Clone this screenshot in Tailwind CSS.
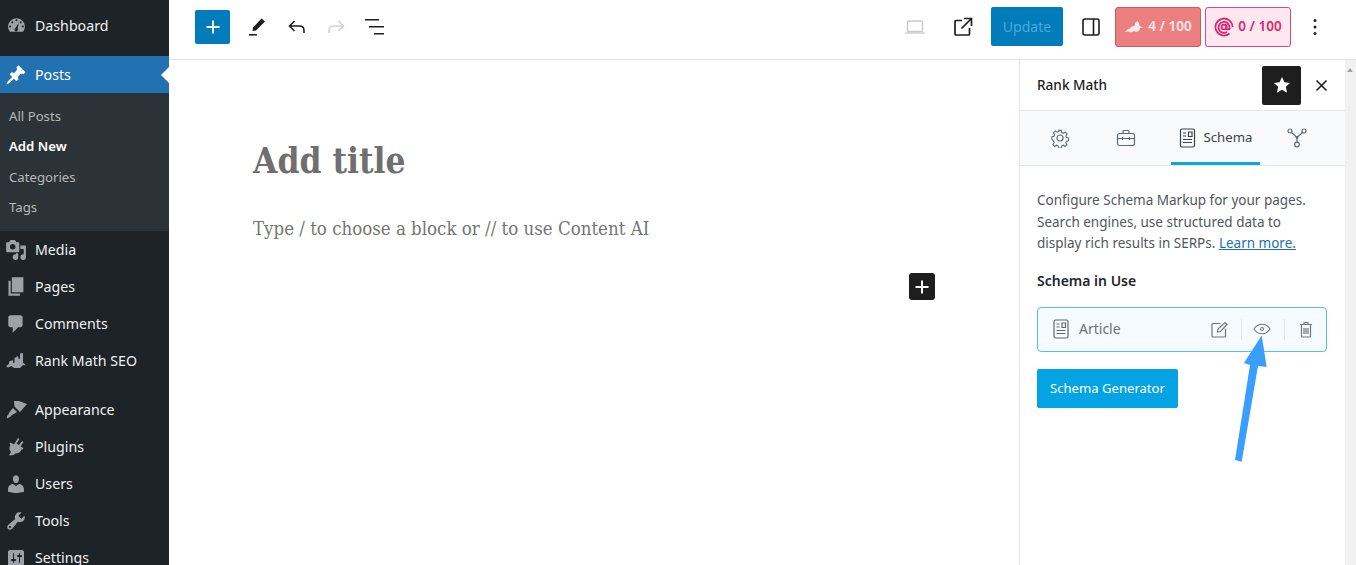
<!DOCTYPE html>
<html>
<head>
<meta charset="utf-8">
<script src="https://cdn.jsdelivr.net/npm/@tailwindcss/browser@4"></script>
</head>
<body class="m-0 overflow-hidden bg-white">
<div class="relative flex h-[565px] w-[1356px] overflow-hidden font-['Noto_Sans',sans-serif]">
  <!-- Sidebar -->
  <aside class="flex w-[169px] shrink-0 flex-col overflow-hidden bg-[#1d2327] text-[14.2px] text-[#eef0f1]">
    <div class="flex h-[56px] shrink-0 items-start pt-[7px]">
      <a class="flex h-[37px] w-full items-center">
        <span class="mr-[3px] flex w-[32px] justify-center text-[#9ca2a7]"><svg width="21" height="21" viewBox="0 0 20 20" fill="currentColor"><path fill-rule="evenodd" d="M3.760 16h12.480c1.100-1.370 1.760-3.110 1.760-5 0-4.420-3.580-8-8-8s-8 3.580-8 8c0 1.890.660 3.630 1.760 5zM10 4a1 1 0 1 1 0 2 1 1 0 0 1 0-2zM6 6a1 1 0 1 1 0 2 1 1 0 0 1 0-2zm8 0a1 1 0 1 1 0 2 1 1 0 0 1 0-2zM4 10a1 1 0 1 1 0 2 1 1 0 0 1 0-2zm12 0a1 1 0 1 1 0 2 1 1 0 0 1 0-2zM12 7.500l-.8 5.700a1.600 1.600 0 1 1-2.300-.600z"/></svg></span>
        <span>Dashboard</span>
      </a>
    </div>
    <a class="relative flex h-[37px] shrink-0 items-center bg-[#2271b1] text-white">
      <span class="mr-[3px] flex w-[32px] justify-center"><svg width="22" height="22" viewBox="0 0 20 20" fill="currentColor"><path d="M10.440 3.020l1.820-1.820 6.360 6.350-1.830 1.820c-1.050-.680-2.480-.570-3.410.360l-.750.750c-.920.930-1.040 2.350-.350 3.410l-1.830 1.820-2.410-2.410-2.800 2.790c-.420.420-3.380 2.710-3.800 2.290s1.860-3.390 2.280-3.810l2.790-2.790L4.100 9.360l1.830-1.820c1.050.690 2.480.570 3.400-.360l.750-.750c.930-.920 1.050-2.350.360-3.410z"/></svg></span>
      <span>Posts</span>
      <span class="absolute right-0 h-0 w-0 border-y-[8px] border-r-[8px] border-y-transparent border-r-white"></span>
    </a>
    <div class="flex h-[138px] shrink-0 flex-col bg-[#2c3338] pt-[8px] pl-[9px] text-[13.2px] text-[#b4b9be]">
      <a class="flex h-[31px] items-center pt-[1px]">All Posts</a>
      <a class="flex h-[30px] items-center font-semibold text-white">Add New</a>
      <a class="flex h-[31px] items-center">Categories</a>
      <a class="flex h-[30px] items-center">Tags</a>
    </div>
    <nav class="flex flex-col">
      <a class="flex h-[37px] shrink-0 items-center pt-[1px]"><span class="mr-[3px] flex w-[32px] justify-center text-[#9ca2a7]"><svg width="22" height="22" viewBox="0 0 20 20" fill="currentColor"><path fill-rule="evenodd" d="M13 11V4c0-.550-.450-1-1-1h-1.670L9 1H5L3.670 3H2c-.550 0-1 .450-1 1v7c0 .550.450 1 1 1h10c.550 0 1-.450 1-1zM7 4.500a2.500 2.500 0 1 1 0 5 2.500 2.500 0 0 1 0-5zM14 6h5v10.500a2.500 2.500 0 1 1-2-2.450V9h-3V6zm-4 8.050V13h2v3.500a2.500 2.500 0 1 1-2-2.450z"/></svg></span><span>Media</span></a>
      <a class="flex h-[37px] shrink-0 items-center"><span class="mr-[3px] flex w-[32px] justify-center text-[#9ca2a7]"><svg width="23" height="23" viewBox="0 0 20 20" fill="currentColor"><path d="M6 15V2h10v13H6zm-1 1h8v2H3V5h2v11z"/></svg></span><span>Pages</span></a>
      <a class="flex h-[37px] shrink-0 items-center"><span class="mr-[3px] flex w-[32px] justify-center text-[#9ca2a7]"><svg width="22" height="22" viewBox="0 0 20 20" fill="currentColor"><path d="M5 2h9c1.100 0 2 .900 2 2v7c0 1.100-.900 2-2 2h-2l-5 5v-5H5c-1.100 0-2-.900-2-2V4c0-1.100.900-2 2-2z"/></svg></span><span>Comments</span></a>
      <a class="flex h-[37px] shrink-0 items-center"><span class="mr-[3px] flex w-[32px] justify-center text-[#9ca2a7]"><svg width="22" height="16" viewBox="0 0 22 16" fill="currentColor"><path d="M1 13l3-2V8.500L8 7v3l1.500-.5V5L13 3l.5 3 1.500-.5V.5L18 0v9.500l3 3-3-.5-3 3H9L6.500 13 3 14.500z"/></svg></span><span>Rank Math SEO</span></a>
      <div class="h-[12px] shrink-0"></div>
      <a class="flex h-[37px] shrink-0 items-center"><span class="mr-[3px] flex w-[32px] justify-center text-[#9ca2a7]"><svg width="21" height="19" viewBox="0 0 21 19" fill="currentColor"><path d="M8 1h5l8 3-7 8-3-3-2.500-2.500zM7 8l4 4-3 2c-2 .500-3 2-4 3l-3 1.500L1 16c1-1 2-2 2.500-4z"/></svg></span><span>Appearance</span></a>
      <a class="flex h-[37px] shrink-0 items-center"><span class="mr-[3px] flex w-[32px] justify-center text-[#9ca2a7]"><svg width="18" height="18" viewBox="0 0 18 18" fill="currentColor"><path d="M11 0l1.500 1-3 4.500L12 7l3-4 1.500 1-3 4.500 3 1.500-1 1.500h-1c-1 2.500-3 4-6 4l-2 1.500-4.500.500 2-3.500C2 12 2 9 3.500 7l-1-1 1-1.500L7 6.500z"/></svg></span><span>Plugins</span></a>
      <a class="flex h-[37px] shrink-0 items-center"><span class="mr-[3px] flex w-[32px] justify-center text-[#9ca2a7]"><svg width="22" height="22" viewBox="0 0 20 20" fill="currentColor"><path d="M10 9.250c-2.270 0-2.730-3.440-2.730-3.440C7 4.020 7.820 2 9.970 2c2.160 0 2.980 2.020 2.710 3.810 0 0-.410 3.440-2.680 3.440zm0 2.570L12.720 10c2.390 0 4.520 2.330 4.520 4.530v2.490s-3.650 1.130-7.240 1.130c-3.650 0-7.240-1.130-7.240-1.130v-2.490c0-2.250 1.940-4.480 4.470-4.480z"/></svg></span><span>Users</span></a>
      <a class="flex h-[37px] shrink-0 items-center"><span class="mr-[3px] flex w-[32px] justify-center text-[#9ca2a7]"><svg width="22" height="22" viewBox="0 0 20 20" fill="currentColor"><path fill-rule="evenodd" d="M16.680 9.770c-1.340 1.340-3.300 1.670-4.950.990l-5.410 6.520c-.990.990-2.590.990-3.570 0-.990-.980-.990-2.580 0-3.570l6.520-5.420c-.680-1.650-.350-3.610.990-4.950 1.280-1.280 3.120-1.620 4.720-1.060l-2.890 2.890 2.820 2.820 2.860-2.870c.530 1.580.180 3.400-1.090 4.670zM3.810 16.210c.400.390 1.040.390 1.430 0 .400-.400.400-1.040 0-1.440-.390-.390-1.030-.390-1.430 0-.390.400-.390 1.040 0 1.440z"/></svg></span><span>Tools</span></a>
      <a class="flex h-[37px] shrink-0 items-center"><span class="mr-[3px] flex w-[32px] justify-center text-[#9ca2a7]"><svg width="20" height="20" viewBox="0 0 20 20" fill="currentColor"><path fill-rule="evenodd" d="M18 16V4c0-1.100-.900-2-2-2H4c-1.100 0-2 .900-2 2v12c0 1.100.900 2 2 2h12c1.100 0 2-.900 2-2zM8 11h1c.550 0 1 .450 1 1s-.450 1-1 1H8v1.500c0 .280-.220.500-.500.500s-.500-.220-.500-.500V13H6c-.550 0-1-.450-1-1s.450-1 1-1h1V5.500c0-.280.220-.500.500-.500s.500.220.500.500V11zm5-2h-1c-.550 0-1-.450-1-1s.450-1 1-1h1V5.500c0-.280.220-.500.500-.500s.500.220.500.500V7h1c.550 0 1 .450 1 1s-.450 1-1 1h-1v5.500c0 .280-.220.500-.500.500s-.500-.220-.500-.500V9z"/></svg></span><span>Settings</span></a>
    </nav>
  </aside>

  <!-- Main -->
  <div class="flex min-w-0 flex-1 flex-col">
    <!-- Top bar -->
    <header class="flex h-[60px] shrink-0 items-center border-b border-[#e2e3e4] pb-[6px] pl-[26px] text-[#1e1e1e]">
      <button class="flex h-[34px] w-[35px] items-center justify-center rounded-[2px] bg-[#007cba] text-white"><svg width="18" height="18" viewBox="0 0 18 18" fill="none" stroke="currentColor" stroke-width="1.800"><path d="M9 2.500v13M2.500 9h13"/></svg></button>
      <span class="ml-[15px] flex w-[24px] justify-center"><svg width="20" height="20" viewBox="0 0 20 20" fill="currentColor"><path d="M14.500 1.500l3.500 3L9 13.500l-3.500.500.500-3.500z"/><path d="M2 17h8v1.600H2z"/></svg></span>
      <span class="ml-[16px] flex w-[24px] justify-center"><svg width="20" height="18" viewBox="0 0 20 18" fill="none" stroke="currentColor" stroke-width="1.600"><path d="M7.500 3L2.500 8l5 5M3 8h9.500c3 0 4.500 2 4.500 4.500V15"/></svg></span>
      <span class="ml-[15px] flex w-[24px] justify-center text-[#d0d2d3]"><svg width="20" height="18" viewBox="0 0 20 18" fill="none" stroke="currentColor" stroke-width="1.600"><path d="M12.500 3l5 5-5 5M17 8H7.500C4.500 8 3 10 3 12.500V15"/></svg></span>
      <span class="ml-[15px] flex w-[24px] justify-center"><svg width="22" height="18" viewBox="0 0 22 18" fill="currentColor"><path d="M1 1h14v1.600H1zM5 8h15v1.600H5zM10 15h10v1.600H10z"/></svg></span>
      <span class="ml-auto flex w-[24px] justify-center text-[#c8c9ca]"><svg width="22" height="16" viewBox="0 0 22 16" fill="none" stroke="currentColor" stroke-width="1.300"><rect x="3.500" y="2" width="15" height="10.500" rx="1"/><path d="M1 14h20"/></svg></span>
      <span class="ml-[24px] flex w-[24px] justify-center"><svg width="20" height="20" viewBox="0 0 20 20" fill="none" stroke="currentColor" stroke-width="1.700"><path d="M9 3.500H3a1 1 0 0 0-1 1V17a1 1 0 0 0 1 1h12.500a1 1 0 0 0 1-1v-6M11 1.500h7.500V9M18.500 1.500L8.500 11.500"/></svg></span>
      <button class="ml-[16px] flex h-[39px] w-[72px] items-center justify-center rounded-[2px] bg-[#007cba] text-[14px] text-[#4fa6d6]">Update</button>
      <span class="ml-[16px] flex w-[24px] justify-center"><svg width="18" height="18" viewBox="0 0 18 18" fill="none" stroke="currentColor" stroke-width="1.600"><rect x="1" y="1" width="16" height="16" rx="2"/><path d="M11.500 1v16"/></svg></span>
      <button class="ml-[12px] flex h-[40px] w-[86px] items-center justify-center gap-[4px] rounded-[3px] border border-[#cf5a5a] bg-[#ec8080] text-[13.5px] font-semibold text-[#fbeaea]"><svg width="20" height="16" viewBox="0 0 20 16" fill="currentColor"><path d="M1 13l3-3 2-.500 1.500-2 3-.500.500-3 2.500-2 1.500 2 .500 3 4 1.500-3.500.500L15 12l-3 1-2-1-3 1.500-1.500-1z"/></svg><span>4 / 100</span></button>
      <button class="ml-[4px] flex h-[40px] w-[86px] items-center justify-center gap-[4px] rounded-[3px] border border-[#e0457e] bg-[#fde8f0] text-[13.5px] font-semibold text-[#e0246e]"><svg width="20" height="20" viewBox="0 0 20 20" fill="none" stroke="currentColor" stroke-width="1.800"><path d="M15.500 16.500A8.500 8.500 0 1 1 18.500 10"/><path d="M13 15a5.500 5.500 0 1 1 2.500-5v2.500"/><circle cx="10" cy="10" r="2.400"/><path d="M12.500 7.500v3.500a1.500 1.500 0 0 0 3 0"/></svg><span>0 / 100</span></button>
      <span class="ml-[12px] flex w-[24px] justify-center"><svg width="4" height="18" viewBox="0 0 4 18" fill="currentColor"><circle cx="2" cy="2.500" r="1.500"/><circle cx="2" cy="9" r="1.500"/><circle cx="2" cy="15.500" r="1.500"/></svg></span>
      <span class="w-[29px] shrink-0"></span>
    </header>

    <div class="flex min-h-0 flex-1">
      <!-- Editor -->
      <main class="relative w-[850px] shrink-0 pl-[84px] font-['DejaVu_Serif',serif] font-stretch-condensed">
        <h1 class="mt-[79px] text-[35px] leading-[44px] font-bold text-[#6f6f6f]">Add title</h1>
        <p class="mt-[31px] text-[18.5px] leading-[30px] text-[#757575]">Type / to choose a block or // to use Content AI</p>
        <button class="absolute top-[213px] left-[740px] flex h-[27px] w-[26px] items-center justify-center rounded-[3px] bg-[#1e1e1e] text-white"><svg width="16" height="16" viewBox="0 0 16 16" fill="none" stroke="currentColor" stroke-width="2"><path d="M8 1.500v13M1.500 8h13"/></svg></button>
      </main>

      <!-- Right panel -->
      <section class="flex w-[326px] shrink-0 flex-col border-l border-[#e4e5e6]">
        <div class="flex h-[50px] shrink-0 items-center pl-[17px] text-[13.6px] font-medium text-[#1e1e1e]">
          <span>Rank Math</span>
          <button class="ml-auto flex h-[39px] w-[39px] items-center justify-center rounded-[2px] bg-[#1e1e1e] text-white"><svg width="18" height="18" viewBox="0 0 20 20" fill="currentColor"><path d="M10 1l2.700 6 6.300.700-4.700 4.300 1.300 6.500L10 15.200 4.400 18.500 5.700 12 1 7.700 7.300 7z"/></svg></button>
          <span class="mr-[17px] ml-[13px] flex w-[14px] justify-center"><svg width="13" height="13" viewBox="0 0 13 13" fill="none" stroke="currentColor" stroke-width="1.600"><path d="M1.500 1.500l10 10M11.500 1.500l-10 10"/></svg></span>
        </div>
        <div class="flex h-[56px] shrink-0 items-stretch border-y border-[#e4e7ea] bg-[#f8fafb] text-[13.2px] text-[#3c434a]">
          <span class="flex w-[79px] items-center justify-center"><svg width="20" height="20" viewBox="0 0 20 20" fill="none" stroke="#5f6b73" stroke-width="1.200"><circle cx="10" cy="10" r="3"/><path d="M8.500 1.500h3l.500 2.500 1.700.800 2.200-1.300 2 2.200-1.400 2.100.600 1.700 2.400.500v3l-2.400.500-.700 1.700 1.400 2.100-2.100 2.100-2.100-1.400-1.700.700-.400 2.400h-3l-.500-2.400-1.700-.700-2.100 1.400-2.100-2.100 1.400-2.100-.700-1.700L1 11.500v-3l2.400-.500.700-1.700L2.700 4.200l2.100-2.100 2.100 1.400 1.700-.700z" transform="translate(1 1) scale(.9)"/></svg></span>
          <span class="flex w-[54px] items-center justify-center"><svg width="20" height="18" viewBox="0 0 20 18" fill="none" stroke="#5f6b73" stroke-width="1.200"><rect x="1.500" y="4.500" width="17" height="12" rx="2"/><path d="M7 4.500V2.500a1 1 0 0 1 1-1h4a1 1 0 0 1 1 1v2M1.500 9.500h17M6.500 8v3M13.500 8v3"/></svg></span>
          <span class="ml-[18px] flex w-[89px] items-center justify-center gap-[8px] border-b-[3px] border-[#12a4dc] pt-[2px]"><svg width="17" height="20" viewBox="0 0 16 20" fill="none" stroke="#3c434a" stroke-width="1.200"><rect x="1" y="1" width="14" height="18" rx="1.500"/><path d="M3.500 5h3M3.500 8h3M9 4h3.500v4.500H9zM3.500 11.500h9M3.500 14.500h9"/></svg><span>Schema</span></span>
          <span class="ml-[17px] flex w-[40px] items-center justify-center"><svg width="20" height="20" viewBox="0 0 20 20" fill="none" stroke="#5f6b73" stroke-width="1.200"><circle cx="3" cy="3" r="2"/><circle cx="17" cy="3" r="2"/><circle cx="10" cy="16.500" r="2.300"/><circle cx="10" cy="9.500" r=".800"/><path d="M4.500 4.500L10 9.500 15.500 4.500M10 9.500v4.700"/></svg></span>
        </div>
        <div class="px-[17px] pt-[24px] text-[13.5px] leading-[21.500px] text-[#50575e]">
          <p class="w-[290px]">Configure Schema Markup for your pages. Search engines, use structured data to display rich results in SERPs. <a class="text-[#2271b1] underline">Learn more.</a></p>
          <h3 class="mt-[15px] text-[14px] leading-[22px] font-semibold text-[#23282d]">Schema in Use</h3>
          <div class="mt-[15px] flex h-[45px] w-[290px] items-center rounded-[4px] border border-[#55c2e3] bg-[#f5fbff] pl-[15px]">
            <svg width="16" height="20" viewBox="0 0 16 20" fill="none" stroke="#5f6b73" stroke-width="1.200"><rect x="1" y="1" width="14" height="18" rx="1.500"/><path d="M3.500 5h3M3.500 8h3M9 4h3.500v4.500H9zM3.500 11.500h9M3.500 14.500h9"/></svg>
            <span class="ml-[10px] text-[14px] text-[#6b7278]">Article</span>
            <span class="ml-auto flex w-[18px] justify-center"><svg width="17" height="17" viewBox="0 0 17 17" fill="none" stroke="#70797f" stroke-width="1.200"><path d="M9.500 2.500H2a1 1 0 0 0-1 1V15a1 1 0 0 0 1 1h11.500a1 1 0 0 0 1-1V7.500"/><path d="M6.500 11l.500-3 7-6.500 2 2-6.500 7z"/></svg></span>
            <span class="ml-[13px] h-[21px] w-[1px] bg-[#dfe7eb]"></span>
            <span class="ml-[11px] flex w-[18px] justify-center"><svg width="18" height="12" viewBox="0 0 18 12" fill="none" stroke="#70797f" stroke-width="1.100"><path d="M1 6c2-3.200 5-4.800 8-4.800s6 1.600 8 4.800c-2 3.200-5 4.800-8 4.800S3 9.200 1 6z"/><circle cx="9" cy="6" r="1.500"/></svg></span>
            <span class="ml-[13px] h-[21px] w-[1px] bg-[#dfe7eb]"></span>
            <span class="ml-[14px] mr-[13px] flex w-[14px] justify-center"><svg width="14" height="17" viewBox="0 0 14 17" fill="none" stroke="#70797f" stroke-width="1.200"><path d="M1 3.500h12M5 3.500V1.500h4v2M2.500 3.500v11.500a1 1 0 0 0 1 1h7a1 1 0 0 0 1-1V3.500M5 7v6M7 7v6M9 7v6"/></svg></span>
          </div>
          <button class="mt-[17px] flex h-[39px] w-[141px] items-center justify-center rounded-[2px] bg-[#04a4e4] pt-[1px] text-[13.1px] text-white">Schema Generator</button>
        </div>
      </section>

      <!-- Scrollbar -->
      <div class="relative w-[11px] shrink-0 bg-[#f1f1f1]">
        <span class="absolute top-[8px] left-[2px] h-0 w-0 border-x-[3.500px] border-b-[4px] border-x-transparent border-b-[#a3a3a3]"></span>
      </div>
    </div>
  </div>

  <!-- Annotation arrow -->
  <svg class="pointer-events-none absolute top-[330px] left-[1230px]" width="45" height="135" viewBox="0 0 45 135" fill="#3a9eff"><path d="M31.700 5.500L36.700 37 28 36 11.700 131.700 5 130 20 35 14 33z"/></svg>
</div>
</body>
</html>
